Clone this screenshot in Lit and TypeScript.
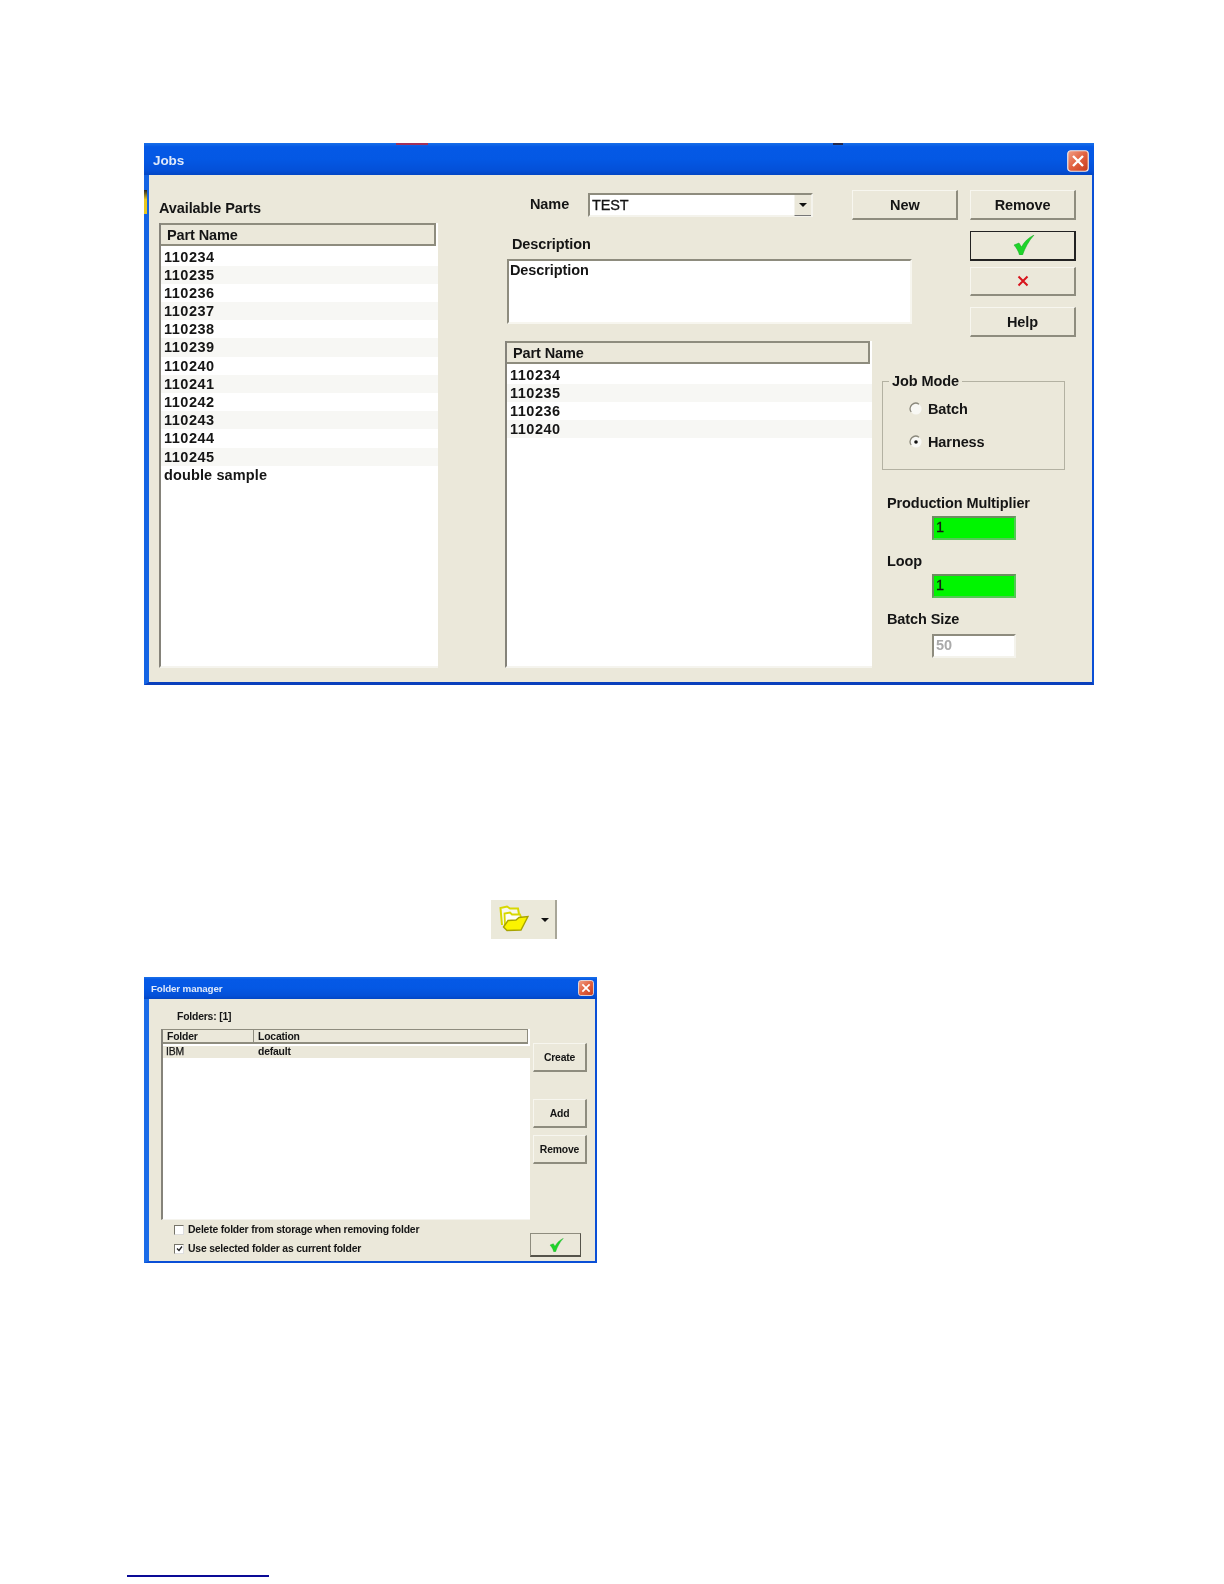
import { LitElement, html, css, svg } from "lit";
import { customElement } from "lit/decorators.js";

const check = (w: number, h: number) => html`<svg width=${w} height=${h} viewBox="0 0 24 20"><path d="M3 10 L8 8 L10.5 12 C13 7 17 3 23 0 C17.5 6 14 13 11.5 20 L8.5 20 C7.5 16 5.5 13 3 10Z" fill="#1ed42a" stroke="#12a820" stroke-width=".5"/></svg>`;
const cross = html`<svg width="12" height="12" viewBox="0 0 12 12"><path d="M1.5 1.5 L10.5 10.5 M10.5 1.5 L1.5 10.5" stroke="#d8141c" stroke-width="2"/></svg>`;
const closeBtn = (s: number) => html`<svg width=${s} height=${s} viewBox="0 0 22 22"><defs><linearGradient id="cg" x1="0" y1="0" x2="1" y2="1"><stop offset="0" stop-color="#f0a088"/><stop offset=".5" stop-color="#e2613f"/><stop offset="1" stop-color="#c53a1c"/></linearGradient></defs><rect x=".75" y=".75" width="20.5" height="20.5" rx="3" fill="url(#cg)" stroke="#f2e6e2" stroke-width="1.2"/><path d="M6 6 L16 16 M16 6 L6 16" stroke="#fff" stroke-width="2.4"/></svg>`;
const radio = (on: boolean) => html`<svg width="14" height="14" viewBox="0 0 14 14"><circle cx="7" cy="7" r="5.6" fill="#f8f8f4"/><path d="M2.2 10 A5.6 5.6 0 0 1 10 2.2" fill="none" stroke="#8a887c" stroke-width="1.3"/>${on ? svg`<circle cx="7" cy="7" r="1.8" fill="#111"/>` : ""}</svg>`;
const folder = html`<svg class="fold" width="30" height="28" viewBox="0 0 30 28"><path d="M3 20 L1.5 3 L8 1.5 L11 3.5 L19 3.5 L20 9" fill="#f8f8ee" stroke="#d8d800" stroke-width="2"/><path d="M6 20 L5.5 8.5 L11 7.5 L13 9.5 L21 9.5 L22 12" fill="#fffff6" stroke="#d8d800" stroke-width="1.8"/><path d="M4.5 22 L8 25.5 L22 25 L29 11.5 L20 12.5 L17 15 L9 15.5 Z" fill="#fbf400" stroke="#a8a400" stroke-width="1.4"/></svg>`;

const parts = ["110234","110235","110236","110237","110238","110239","110240","110241","110242","110243","110244","110245","double sample"];
const chosen = ["110234","110235","110236","110240"];

@customElement("app-root")
export class AppRoot extends LitElement {
  static styles = css`
    :host { display: block; width: 1224px; height: 1584px; background: #fff; font-family: "Liberation Sans", Arial, sans-serif; color: #151515; overflow: hidden; }
    .page { display: flex; flex-direction: column; align-items: flex-start; padding-top: 143px; }
    .win { position: relative; margin-left: 144px; box-sizing: border-box; display: flex; flex-direction: column; background: #ebe8da; border-radius: 3px 3px 0 0; filter: blur(.4px); }
    .jobs { width: 950px; height: 542px; border: solid #0a4fd6; border-width: 0 2px 3px 5px; border-left-color: #1464e4; border-bottom-color: #0a3fbc; font-size: 14.5px; font-weight: 700; letter-spacing: -.1px; }
    .title { display: flex; align-items: center; justify-content: space-between; box-sizing: border-box; background: linear-gradient(#1a70e8 0, #0559e6 12%, #0458e4 50%, #0450d8 85%, #0346c4 100%); color: #dfe9fa; }
    .jobs .title { height: 32px; margin: 0 -2px 0 -5px; padding: 3px 5px 0 9px; font-size: 13.5px; }
    .scar { position: absolute; height: 2px; top: 0; background: #a0305a; }
    .scar.a { left: 247px; width: 32px; }
    .scar.b { left: 684px; width: 10px; background: #222a50; }
    .nick { position: absolute; left: -5px; top: 47px; width: 3px; height: 24px; background: linear-gradient(#222, #e8c820 40%, #e8c820); }
    .jobs-body { flex: 1; display: flex; padding: 0 0 14px 10px; }
    .left { width: 279px; display: flex; flex-direction: column; }
    .avail { height: 48px; display: flex; align-items: flex-end; padding-bottom: 7px; box-sizing: border-box; padding-left: 0; }
    .list { flex: 1; background: #fff; border-left: 2px solid #85837a; border-bottom: 2px solid #f5f4ee; display: flex; flex-direction: column; }
    .hdr { display: flex; align-items: center; background: #ebe8da; box-sizing: border-box; border: 2px solid #8e8c7e; border-left: 0; margin-right: 2px; }
    .jobs .hdr { height: 23px; padding-left: 6px; margin-bottom: 1.5px; }
    .row { height: 18.2px; line-height: 18px; padding-left: 3px; background: #fff; letter-spacing: .5px; }
    .row:nth-child(even) { background: #f7f7f4; }
    .row.word { letter-spacing: .12px; background: #fff; }
    .mid { width: 571px; margin-left: 67px; display: flex; flex-direction: column; padding-top: 15px; }
    .r1 { display: flex; align-items: center; height: 30px; }
    .r1 .lbl { width: 83px; padding: 0 0 3px 25px; box-sizing: border-box; }
    .combo { width: 226px; height: 24px; box-sizing: border-box; display: flex; align-items: center; background: #fff; border: 2px solid #8e8c7e; border-right-color: #f4f3ec; border-bottom-color: #f4f3ec; font-weight: 400; -webkit-text-stroke: .3px #151515; padding-left: 2px; }
    .combo span { flex: 1; }
    .arrow { width: 16px; height: 20px; display: flex; align-items: center; justify-content: center; background: #ebe8da; border-left: 1px solid #f4f3ec; border-bottom: 1px solid #777; }
    .tri { width: 0; height: 0; border: 4px solid transparent; border-top: 4px solid #111; border-bottom: 0; }
    .btn { display: flex; align-items: center; justify-content: center; box-sizing: border-box; width: 106px; height: 30px; background: #ebe8da; border: 1px solid #f7f6ef; border-right: 2px solid #8e8c7e; border-bottom: 2px solid #8e8c7e; }
    .r1 .btn.new { margin-left: 39px; margin-right: 12px; }
    .r2 { display: flex; height: 106px; margin-top: 11px; }
    .desc { width: 407px; display: flex; flex-direction: column; }
    .desc .lbl { height: 28px; padding-left: 7px; padding-top: 3px; box-sizing: border-box; line-height: 20px; }
    .ta { margin-left: 2px; width: 405px; height: 65px; box-sizing: border-box; background: #fff; border: 2px solid #8e8c7e; border-right-color: #f7f6ef; border-bottom-color: #f7f6ef; padding-left: 1px; line-height: 18px; }
    .stack { margin-left: 58px; display: flex; flex-direction: column; }
    .btn.def { border: 1px solid #222; border-right-width: 2px; border-bottom-width: 2px; margin-bottom: 6px; }
    .btn.x { margin-bottom: 11px; }
    .r3 { flex: 1; display: flex; margin-top: 4px; min-height: 0; }
    .list2 { width: 365px; flex: none; }
    .side { margin-left: 10px; width: 184px; display: flex; flex-direction: column; }
    .group { margin-top: 40px; position: relative; width: 183px; height: 89px; box-sizing: border-box; border: 1px solid #b3b1a2; padding: 18px 0 0 26px; display: flex; flex-direction: column; gap: 15px; }
    .group .cap { position: absolute; left: 6px; top: -10px; padding: 0 3px; background: #ebe8da; line-height: 18px; }
    .opt { display: flex; align-items: center; gap: 5px; height: 18px; }
    .fields { padding-left: 5px; display: flex; flex-direction: column; margin-top: 24px; }
    .fields .flbl { line-height: 18px; height: 18px; white-space: nowrap; }
    .inp { margin-left: 45px; width: 84px; height: 24px; box-sizing: border-box; background: #00f500; border: 2px solid #6d8d62; border-right-color: #55c855; border-bottom-color: #55c855; line-height: 19px; padding-left: 2px; margin-top: 4px; margin-bottom: 12px; font-weight: 400; -webkit-text-stroke: .3px #151515; }
    .inp.off { background: #fff; border-color: #8e8c7e #f4f3ec #f4f3ec #8e8c7e; color: #aaa; font-weight: 700; -webkit-text-stroke: 0; margin-bottom: 0; margin-top: 6px; }
    .tool { margin-left: 491px; margin-top: 215px; width: 66px; height: 39px; box-sizing: border-box; background: #ebe9da; border-right: 2px solid #a8a698; display: flex; align-items: center; padding-left: 8px; filter: blur(.4px); }
    .tool .fold { margin-bottom: 2px; }
    .tool .tri { margin-left: 12px; }
    .fm { width: 453px; height: 286px; margin-top: 38px; border: solid #0a4fd6; border-width: 0 2px 2px 5px; border-left-color: #1a6ce8; font-size: 10.4px; font-weight: 700; letter-spacing: -.19px; }
    .fm .title { height: 22px; margin: 0 -2px 0 -5px; padding: 0 3px 0 7px; font-size: 9.8px; letter-spacing: -.15px; }
    .fm-body { flex: 1; display: flex; padding-left: 12px; }
    .fm-left { width: 369px; display: flex; flex-direction: column; }
    .folders { height: 30px; padding: 11px 0 0 16px; box-sizing: border-box; line-height: 14px; }
    .fm-list { height: 190px; flex: none; background: #fff; border-left: 2px solid #85837a; border-bottom: 1px solid #f5f4ee; display: flex; flex-direction: column; }
    .fm-hdr { display: flex; height: 15px; box-sizing: border-box; border: 1px solid #8e8c7e; border-bottom-width: 2px; border-left: 0; background: #ebe8da; margin-right: 2px; margin-bottom: 2px; line-height: 13px; }
    .fm-hdr span:first-child { width: 91px; padding-left: 4px; box-sizing: border-box; border-right: 1px solid #8e8c7e; }
    .fm-hdr span:last-child { padding-left: 4px; }
    .fm-row { display: flex; height: 12px; line-height: 12px; background: #ebe8da; }
    .fm-row span:first-child { width: 91px; padding-left: 3px; box-sizing: border-box; font-weight: 400; -webkit-text-stroke: .25px #151515; }
    .fm-row span:last-child { padding-left: 4px; }
    .checks { padding: 4px 0 0 13px; display: flex; flex-direction: column; gap: 8px; }
    .ck { display: flex; align-items: center; gap: 4px; height: 11px; white-space: nowrap; }
    .box { width: 10px; height: 10px; box-sizing: border-box; background: #fff; border: 1px solid #77756a; border-right-color: #ddd; border-bottom-color: #ddd; display: flex; align-items: center; justify-content: center; }
    .fm-right { position: relative; flex: 1; display: flex; flex-direction: column; padding: 44px 0 0 3px; }
    .fbtn { width: 54px; height: 29px; box-sizing: border-box; display: flex; align-items: center; justify-content: center; background: #ebe8da; border: 1px solid #f7f6ef; border-right: 2px solid #8e8c7e; border-bottom: 2px solid #8e8c7e; }
    .fbtn.create { margin-bottom: 27px; }
    .fbtn.add { margin-bottom: 7px; }
    .fbtn.ok { margin: 69px 0 0 -3px; width: 51px; height: 24px; border-color: #8e8c7e; border-top: 1px solid #8e8c7e; border-left: 1px solid #8e8c7e; border-right: 1px solid #55534a; border-bottom: 2px solid #55534a; }
    .rule { margin-left: 127px; margin-top: 312px; width: 142px; height: 2px; background: #0a0a96; }
  `;

  render() {
    return html`<div class="page">
      <div class="win jobs">
        <i class="scar a"></i><i class="scar b"></i><i class="nick"></i>
        <div class="title"><span>Jobs</span>${closeBtn(22)}</div>
        <div class="jobs-body">
          <div class="left">
            <div class="avail">Available Parts</div>
            <div class="list">
              <div class="hdr">Part Name</div>
              <div>${parts.map((p) => html`<div class="row ${/^\d+$/.test(p) ? "" : "word"}">${p}</div>`)}</div>
            </div>
          </div>
          <div class="mid">
            <div class="r1">
              <div class="lbl">Name</div>
              <div class="combo"><span>TEST</span><div class="arrow"><i class="tri"></i></div></div>
              <div class="btn new">New</div>
              <div class="btn">Remove</div>
            </div>
            <div class="r2">
              <div class="desc"><div class="lbl">Description</div><div class="ta">Description</div></div>
              <div class="stack">
                <div class="btn def">${check(24, 20)}</div>
                <div class="btn x">${cross}</div>
                <div class="btn">Help</div>
              </div>
            </div>
            <div class="r3">
              <div class="list list2">
                <div class="hdr">Part Name</div>
                <div>${chosen.map((p) => html`<div class="row">${p}</div>`)}</div>
              </div>
              <div class="side">
                <div class="group">
                  <span class="cap">Job Mode</span>
                  <div class="opt">${radio(false)}Batch</div>
                  <div class="opt">${radio(true)}Harness</div>
                </div>
                <div class="fields">
                  <div class="flbl">Production Multiplier</div><div class="inp">1</div>
                  <div class="flbl">Loop</div><div class="inp">1</div>
                  <div class="flbl">Batch Size</div><div class="inp off">50</div>
                </div>
              </div>
            </div>
          </div>
        </div>
      </div>

      <div class="tool">${folder}<i class="tri"></i></div>

      <div class="win fm">
        <div class="title"><span>Folder manager</span>${closeBtn(16)}</div>
        <div class="fm-body">
          <div class="fm-left">
            <div class="folders">Folders: [1]</div>
            <div class="fm-list">
              <div class="fm-hdr"><span>Folder</span><span>Location</span></div>
              <div class="fm-row"><span>IBM</span><span>default</span></div>
            </div>
            <div class="checks">
              <div class="ck"><i class="box"></i>Delete folder from storage when removing folder</div>
              <div class="ck"><i class="box"><svg width="7" height="7" viewBox="0 0 7 7"><path d="M1 3.5 L3 5.5 L6 1.5" fill="none" stroke="#222" stroke-width="1.3"/></svg></i>Use selected folder as current folder</div>
            </div>
          </div>
          <div class="fm-right">
            <div class="fbtn create">Create</div>
            <div class="fbtn add">Add</div>
            <div class="fbtn">Remove</div>
            <div class="fbtn ok">${check(16, 14)}</div>
          </div>
        </div>
      </div>

      <div class="rule"></div>
    </div>`;
  }
}
